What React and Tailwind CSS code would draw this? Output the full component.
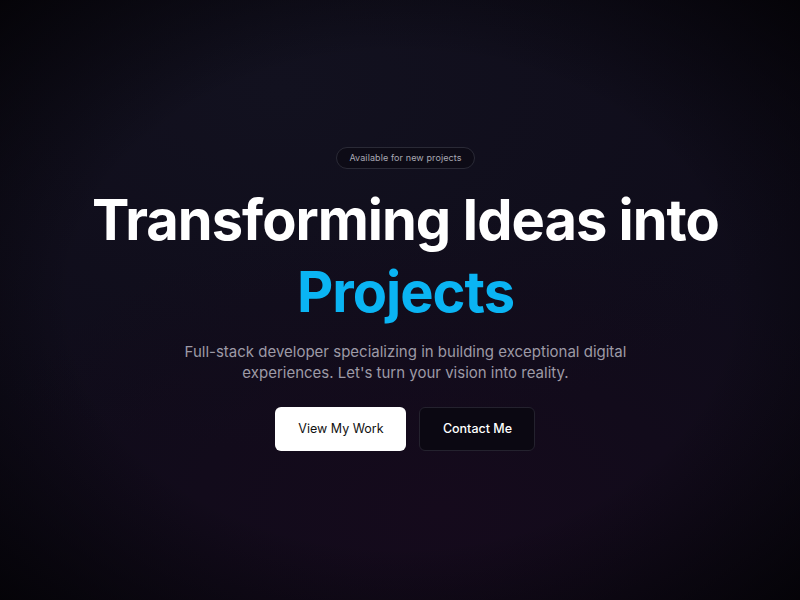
export default function App() {
  return (
    <div
      className="relative w-full h-screen overflow-hidden bg-[#0f0c1a] flex items-center justify-center pl-[11px]"
      style={{ fontFamily: "Inter, 'Noto Sans', sans-serif" }}
    >
      {/* background glow + vignette */}
      <div className="absolute inset-0 bg-[radial-gradient(ellipse_70%_60%_at_35%_15%,#12111f_0%,transparent_100%)]" />
      <div className="absolute inset-0 bg-[radial-gradient(ellipse_60%_50%_at_55%_85%,#150a1c_0%,transparent_100%)]" />
      <div className="absolute inset-0 bg-[radial-gradient(ellipse_75%_75%_at_50%_50%,transparent_55%,#030205_100%)]" />

      <div className="relative flex flex-col items-center text-center -mt-[2px]">
        <div className="rounded-full border border-[#2a2a36] bg-[#0d0b16] px-3 h-[22px] flex items-center text-[9px] tracking-[0.1px] text-[#a9a9b4]">
          Available for new projects
        </div>

        <h1 className="mt-[15px] text-[56px] leading-[72px] font-bold tracking-[-1px] text-white">
          Transforming Ideas into
          <br />
          <span className="text-[#0ab4f3]">Projects</span>
        </h1>

        <p className="mt-[13px] w-[470px] text-[15px] leading-[21px] text-[#9d9aa6]">
          Full-stack developer specializing in building exceptional digital experiences. Let's turn your vision into reality.
        </p>

        <div className="mt-[24px] flex gap-[13px]">
          <button className="h-[44px] w-[131px] rounded-md bg-white text-[12.5px] text-[#111]">
            View My Work
          </button>
          <button className="h-[44px] w-[116px] rounded-md border border-[#24222e] bg-[#0b0812] text-[12.5px] text-white font-medium">
            Contact Me
          </button>
        </div>
      </div>
    </div>
  );
}
